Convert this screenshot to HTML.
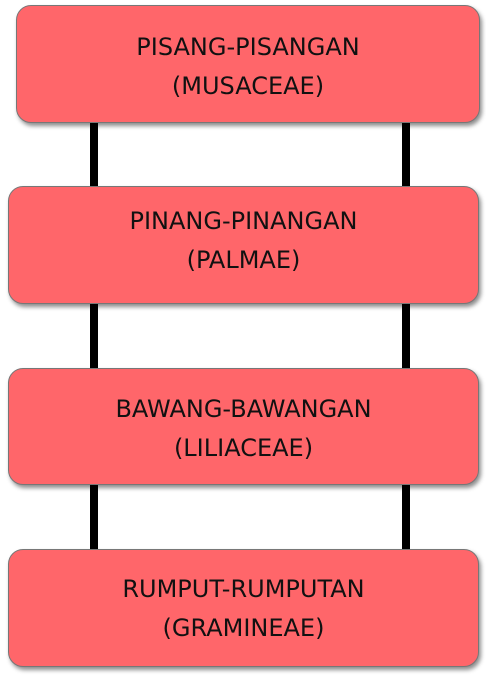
<!DOCTYPE html><html><head><style>
body{margin:0;width:486px;height:676px;background:#fff;position:relative;overflow:hidden;font-family:"DejaVu Sans","Liberation Sans",sans-serif;}
.b{position:absolute;background:#ff666a;border:1px solid #777;border-radius:15px;box-shadow:2px 3px 4px rgba(0,0,0,.45);box-sizing:border-box;text-align:center;color:#111;font-size:24px;line-height:39px;padding-top:22px;}
.l{position:absolute;width:8px;background:#000;}
</style></head><body>
<div class="l" style="left:90px;top:118px;height:72px"></div>
<div class="l" style="left:402px;top:118px;height:72px"></div>
<div class="l" style="left:90px;top:300px;height:72px"></div>
<div class="l" style="left:402px;top:300px;height:72px"></div>
<div class="l" style="left:90px;top:480px;height:72px"></div>
<div class="l" style="left:402px;top:480px;height:72px"></div>
<div class="b" style="left:16px;top:5px;width:464px;height:118px">PISANG-PISANGAN<br>(MUSACEAE)</div>
<div class="b" style="left:8px;top:186px;width:471px;height:118px;padding-top:15px">PINANG-PINANGAN<br>(PALMAE)</div>
<div class="b" style="left:8px;top:368px;width:471px;height:117px;padding-top:21px">BAWANG-BAWANGAN<br>(LILIACEAE)</div>
<div class="b" style="left:8px;top:549px;width:471px;height:118px;padding-top:20px">RUMPUT-RUMPUTAN<br>(GRAMINEAE)</div>
</body></html>
